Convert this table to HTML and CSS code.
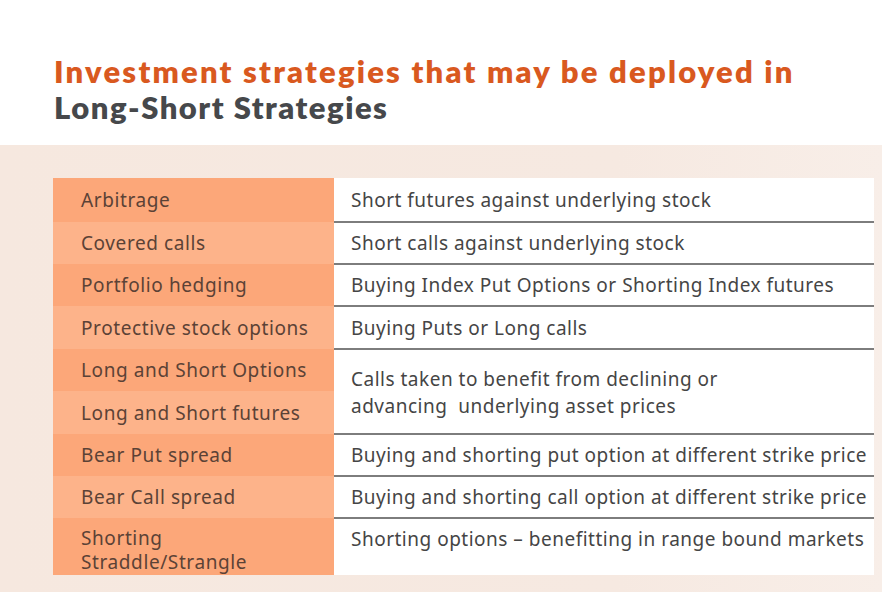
FILE: index.html
```html
<!DOCTYPE html>
<html lang="en">
<head>
<meta charset="utf-8">
<title>Long-Short Strategies</title>
<link rel="stylesheet" href="styles.css">
</head>
<body>
<header class="head">
  <h1 class="title"><span class="title-accent">Investment strategies that may be deployed in</span><span class="title-main">Long-Short Strategies</span></h1>
</header>
<section class="band">
  <table class="strat">
    <tbody>
      <tr class="r1">
        <td class="name dark">Arbitrage</td>
        <td class="desc">Short futures against underlying stock</td>
      </tr>
      <tr class="r2">
        <td class="name light">Covered calls</td>
        <td class="desc">Short calls against underlying stock</td>
      </tr>
      <tr class="r3">
        <td class="name dark">Portfolio hedging</td>
        <td class="desc">Buying Index Put Options or Shorting Index futures</td>
      </tr>
      <tr class="r4">
        <td class="name light">Protective stock options</td>
        <td class="desc">Buying Puts or Long calls</td>
      </tr>
      <tr class="r5">
        <td class="name dark">Long and Short Options</td>
        <td class="desc desc-tall" rowspan="2">Calls taken to benefit from declining or<br>advancing&nbsp; underlying asset prices</td>
      </tr>
      <tr class="r6">
        <td class="name light">Long and Short futures</td>
      </tr>
      <tr class="r7">
        <td class="name dark">Bear Put spread</td>
        <td class="desc">Buying and shorting put option at different strike price</td>
      </tr>
      <tr class="r8">
        <td class="name light">Bear Call spread</td>
        <td class="desc">Buying and shorting call option at different strike price</td>
      </tr>
      <tr class="r9">
        <td class="name dark top">Shorting<br>Straddle/Strangle</td>
        <td class="desc top last">Shorting options – benefitting in range bound markets</td>
      </tr>
    </tbody>
  </table>
</section>
</body>
</html>
```

FILE: styles.css
```css
* { box-sizing: border-box; }
html, body { margin: 0; padding: 0; }
body {
  width: 882px;
  height: 592px;
  overflow: hidden;
  background: #ffffff;
  font-family: "Noto Sans", "Open Sans", sans-serif;
}
.head {
  height: 145px;
  padding: 53px 0 0 54px;
  background: #ffffff;
}
.title {
  margin: 0;
  font-family: Lato, "Noto Sans", sans-serif;
  font-size: 31px;
  font-weight: 800;
  line-height: 36px;
  display: flex;
  flex-direction: column;
}
.title-accent { color: #d9591f; letter-spacing: 2.2px; }
.title-main { color: #46484b; letter-spacing: 1.5px; }

.band {
  height: 447px;
  padding: 33px 0 0 53px;
  background:
    radial-gradient(ellipse 160px 90px at 880px 600px, rgba(200,150,115,0.55), rgba(200,150,115,0) 100%),
    linear-gradient(90deg, #f6e8df 0%, #f6e9e1 70%, #f8eee8 100%);
}
.strat {
  border-collapse: collapse;
  border-spacing: 0;
  font-size: 19px;
  letter-spacing: 0.5px;
  table-layout: fixed;
  width: 821px;
}
.name {
  width: 281px;
  padding: 0 0 0 28px;
  color: #5b4236;
  vertical-align: middle;
  line-height: 24px;
  white-space: nowrap;
  letter-spacing: 0.6px;
}
.dark { background: #fca779; }
.light { background: #fdb38a; }
.desc {
  width: 540px;
  background: #ffffff;
  color: #454545;
  padding: 0 0 0 17px;
  vertical-align: middle;
  border-bottom: 2px solid #7d7d7d;
  line-height: 24px;
  white-space: nowrap;
}
.desc-tall { line-height: 27px; padding-top: 2px; }
.last { border-bottom: none; }
.top { vertical-align: top; padding-top: 8px; }
.r1 { height: 44px; }
.r2 { height: 42px; }
.r3 { height: 42px; }
.r4 { height: 43px; }
.r5 { height: 42px; }
.r6 { height: 43px; }
.r7 { height: 42px; }
.r8 { height: 42px; }
.r9 { height: 57px; }
```
